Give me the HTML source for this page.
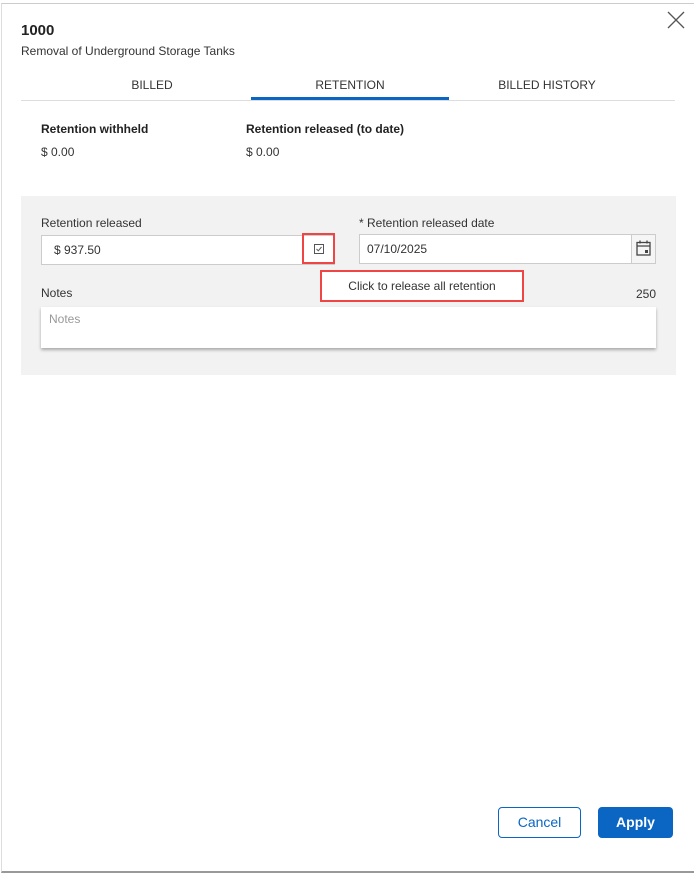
<!DOCTYPE html>
<html><head><meta charset="utf-8"><style>
*{box-sizing:border-box;margin:0;padding:0}
body{width:695px;height:874px;background:#fff;font-family:"Liberation Sans",sans-serif;color:#333;position:relative;overflow:hidden}
.abs{position:absolute}
.frame{left:1px;top:3px;width:693px;height:870px;border-top:1px solid #ccc;border-left:1px solid #ddd;border-bottom:2px solid #999}
.t{font-size:12px;color:#333;white-space:nowrap}
</style></head><body>
<div class="abs frame"></div>
<svg class="abs" style="left:667px;top:11px" width="18" height="18"><path d="M1 1L17 17M17 1L1 17" stroke="#555" stroke-width="1.3"/></svg>
<div class="abs" style="left:21px;top:22px;font-size:15px;font-weight:bold;color:#222">1000</div>
<div class="abs t" style="left:21px;top:44px">Removal of Underground Storage Tanks</div>
<div class="abs" style="left:21px;top:100px;width:654px;height:1px;background:#ddd"></div>
<div class="abs t" style="left:53px;top:78px;width:198px;text-align:center">BILLED</div>
<div class="abs t" style="left:251px;top:78px;width:198px;text-align:center">RETENTION</div>
<div class="abs t" style="left:449px;top:78px;width:196px;text-align:center">BILLED HISTORY</div>
<div class="abs" style="left:251px;top:97px;width:198px;height:3px;background:#0a66c2"></div>
<div class="abs t" style="left:41px;top:122px;font-weight:bold;color:#222">Retention withheld</div>
<div class="abs t" style="left:246px;top:122px;font-weight:bold;color:#222">Retention released (to date)</div>
<div class="abs t" style="left:41px;top:145px">$ 0.00</div>
<div class="abs t" style="left:246px;top:145px">$ 0.00</div>
<div class="abs" style="left:21px;top:196px;width:655px;height:179px;background:#f2f2f2"></div>
<div class="abs t" style="left:41px;top:216px">Retention released</div>
<div class="abs" style="left:41px;top:235px;width:294px;height:30px;background:#fff;border:1px solid #ccc"></div>
<div class="abs t" style="left:54px;top:243px">$ 937.50</div>
<div class="abs" style="left:302px;top:233px;width:33px;height:31px;border:2px solid #f04545"></div>
<svg class="abs" style="left:314px;top:244px" width="10" height="10"><rect x="0.5" y="0.5" width="9" height="9" fill="none" stroke="#555"/><path d="M2.5 5L4.3 6.8L7.5 3" stroke="#555" fill="none"/></svg>
<div class="abs t" style="left:359px;top:216px">* Retention released date</div>
<div class="abs" style="left:359px;top:234px;width:297px;height:30px;background:#fff;border:1px solid #ccc"></div>
<div class="abs" style="left:631px;top:234px;width:25px;height:30px;background:#f5f5f5;border:1px solid #ccc"></div>
<svg class="abs" style="left:636px;top:240px" width="15" height="16"><rect x="1" y="2.5" width="13" height="12.5" fill="none" stroke="#444" stroke-width="1.3"/><path d="M1 6h13M4 0.5v3M11 0.5v3" stroke="#444" stroke-width="1.3"/><rect x="9" y="10" width="3" height="3" fill="#444"/></svg>
<div class="abs t" style="left:367px;top:242px">07/10/2025</div>
<div class="abs t" style="left:41px;top:286px">Notes</div>
<div class="abs t" style="left:636px;top:287px">250</div>
<div class="abs" style="left:41px;top:307px;width:615px;height:41px;background:#fff;box-shadow:0 2px 3px rgba(0,0,0,.3)"></div>
<div class="abs t" style="left:49px;top:312px;color:#999">Notes</div>
<div class="abs" style="left:320px;top:270px;width:204px;height:32px;background:#fff;border:2px solid #f04545"></div>
<div class="abs t" style="left:320px;top:279px;width:204px;text-align:center;color:#333">Click to release all retention</div>
<div class="abs" style="left:498px;top:807px;width:83px;height:31px;border:1px solid #0a66c2;border-radius:4px;color:#0a66c2;font-size:14px;text-align:center;line-height:29px">Cancel</div>
<div class="abs" style="left:598px;top:807px;width:75px;height:31px;background:#0a66c2;border-radius:4px;color:#fff;font-size:14px;font-weight:bold;text-align:center;line-height:31px">Apply</div>
</body></html>
